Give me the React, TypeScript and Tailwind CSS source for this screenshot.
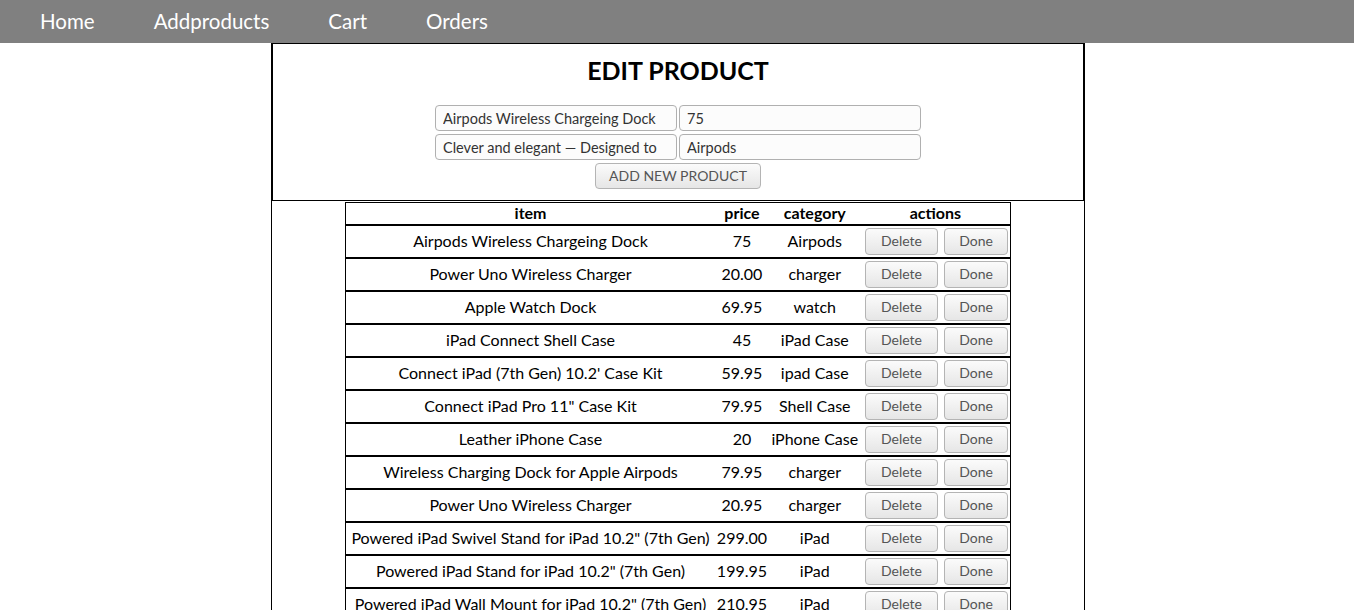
import React from "react";

const products = [
  { item: "Airpods Wireless Chargeing Dock", price: "75", category: "Airpods" },
  { item: "Power Uno Wireless Charger", price: "20.00", category: "charger" },
  { item: "Apple Watch Dock", price: "69.95", category: "watch" },
  { item: "iPad Connect Shell Case", price: "45", category: "iPad Case" },
  { item: "Connect iPad (7th Gen) 10.2' Case Kit", price: "59.95", category: "ipad Case" },
  { item: 'Connect iPad Pro 11" Case Kit', price: "79.95", category: "Shell Case" },
  { item: "Leather iPhone Case", price: "20", category: "iPhone Case" },
  { item: "Wireless Charging Dock for Apple Airpods", price: "79.95", category: "charger" },
  { item: "Power Uno Wireless Charger", price: "20.95", category: "charger" },
  { item: 'Powered iPad Swivel Stand for iPad 10.2" (7th Gen)', price: "299.00", category: "iPad" },
  { item: 'Powered iPad Stand for iPad 10.2" (7th Gen)', price: "199.95", category: "iPad" },
  { item: 'Powered iPad Wall Mount for iPad 10.2" (7th Gen)', price: "210.95", category: "iPad" },
];

const btn =
  "rounded-[4px] border border-[#b4b4b4] bg-gradient-to-b from-[#fbfbfb] to-[#e6e6e6] text-[#555] text-[14px] leading-none";

function Field({ value }: { value: string }) {
  return (
    <input
      readOnly
      value={value}
      className="w-[242px] h-[26px] rounded-[4px] border border-[#b0b0b0] bg-[#fcfcfc] px-[7px] text-[14.5px] text-[#333] outline-none"
    />
  );
}

export default function App() {
  return (
    <div className="min-h-[610px] bg-white text-black font-['Lato','Liberation_Sans',sans-serif]">
      <nav className="flex h-[43px] items-center gap-[59px] bg-[#808080] pb-[1px] pl-[40px] text-[20.5px] text-white">
        <span>Home</span>
        <span>Addproducts</span>
        <span>Cart</span>
        <span>Orders</span>
      </nav>

      <div className="ml-[271px] w-[814px] border-x border-b border-black min-h-[567px]">
        <div className="flex flex-col items-center border border-black pb-[11px]">
          <h1 className="mt-[12px] mb-[20px] text-[25px] font-bold leading-[29px]">EDIT PRODUCT</h1>
          <div className="flex flex-col gap-[3px]">
            <div className="flex gap-[2px]">
              <Field value="Airpods Wireless Chargeing Dock" />
              <Field value="75" />
            </div>
            <div className="flex gap-[2px]">
              <Field value="Clever and elegant — Designed to" />
              <Field value="Airpods" />
            </div>
          </div>
          <button className={`${btn} mt-[3px] h-[26px] w-[166px]`}>ADD NEW PRODUCT</button>
        </div>

        <table className="mx-auto mt-[1px] w-[666px] border-collapse border border-black text-[16px]">
          <thead>
            <tr className="border-b-2 border-black">
              <th className="w-[370px] h-[22px] leading-none">item</th>
              <th className="w-[54px] leading-none">price</th>
              <th className="w-[92px] leading-none">category</th>
              <th className="w-[150px] leading-none">actions</th>
            </tr>
          </thead>
          <tbody>
            {products.map((p, i) => (
              <tr key={i} className="h-[33px] border-b-2 border-black">
                <td className="whitespace-nowrap text-center">{p.item}</td>
                <td className="text-center">{p.price}</td>
                <td className="whitespace-nowrap text-center">{p.category}</td>
                <td>
                  <div className="flex justify-end gap-[6px] pr-[2px]">
                    <button className={`${btn} h-[27px] w-[73px]`}>Delete</button>
                    <button className={`${btn} h-[27px] w-[64px]`}>Done</button>
                  </div>
                </td>
              </tr>
            ))}
          </tbody>
        </table>
      </div>
    </div>
  );
}
